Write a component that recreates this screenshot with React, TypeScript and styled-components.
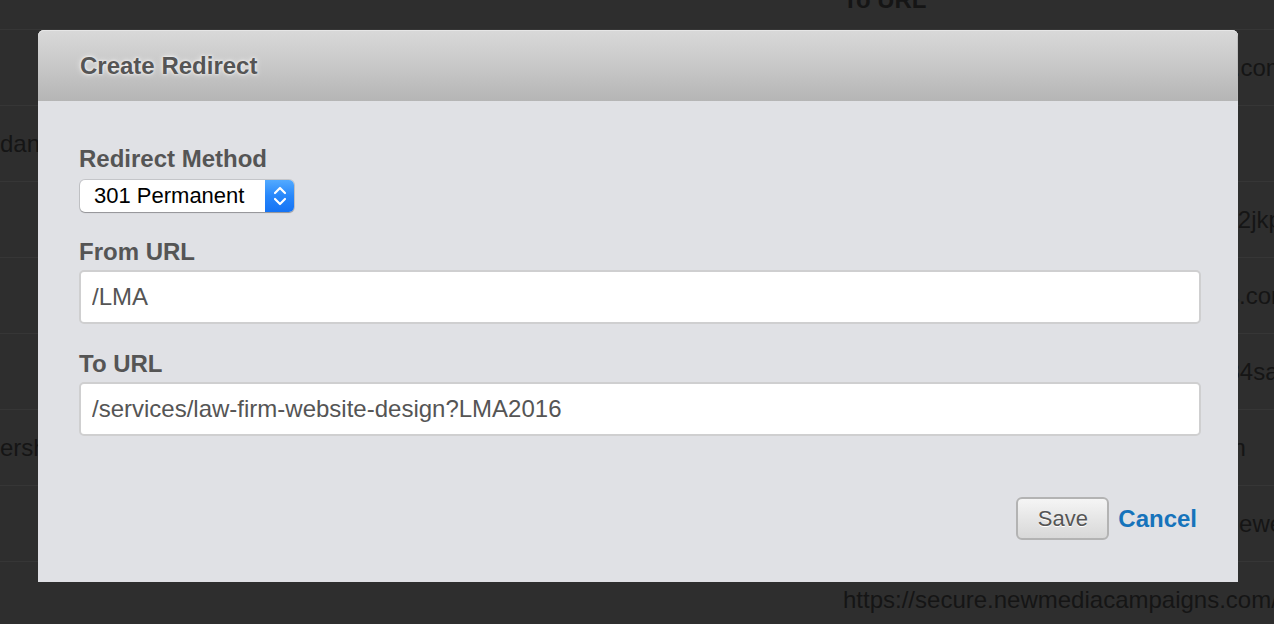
import React, { useEffect, useRef } from "react";
import styled, { createGlobalStyle } from "styled-components";

const GlobalStyle = createGlobalStyle`
  html, body {
    margin: 0;
    padding: 0;
    background: #2e2e2e;
    overflow: hidden;
  }
  body {
    font-family: "Liberation Sans", Arial, Helvetica, sans-serif;
  }
  * { box-sizing: border-box; }
`;

const Page = styled.div`
  width: 1274px;
  height: 624px;
  overflow: hidden;
  background: #2e2e2e;
  color: #151515;
  font-size: 24px;
  position: relative;
`;

const Table = styled.div`
  display: grid;
  grid-template-columns: 843px 1fr;
`;

const HeaderCell = styled.div`
  height: 30px;
  border-bottom: 1px solid #363636;
  font-weight: bold;
  white-space: nowrap;
  overflow: hidden;
  line-height: 24px;
  & > span {
    display: block;
    margin-top: -12px;
  }
`;

const Cell = styled.div`
  height: 76px;
  border-bottom: 1px solid #363636;
  display: flex;
  align-items: center;
  white-space: nowrap;
  overflow: hidden;
  line-height: 28px;
`;

const Modal = styled.div`
  position: absolute;
  left: 38px;
  top: 30px;
  width: 1200px;
  height: 552px;
  display: flex;
  flex-direction: column;
  background: #e0e1e5;
  border-radius: 6px 6px 0 0;
`;

const ModalHeader = styled.div`
  height: 71px;
  flex: none;
  display: flex;
  align-items: center;
  padding-left: 42px;
  border-radius: 6px 6px 0 0;
  background: linear-gradient(to bottom, #d9d9d9 0%, #c8c8c8 50%, #b5b5b5 100%);
  box-shadow: inset 0 1px 0 #e6e6e6, inset -1px 0 0 #bdbdbd;
`;

const Title = styled.h2`
  margin: 0;
  font-size: 24px;
  line-height: 28px;
  font-weight: bold;
  color: #555555;
  text-shadow: 0 0 3px rgba(255, 255, 255, 1), 0 0 6px rgba(255, 255, 255, 0.7);
`;

const ModalBody = styled.div`
  flex: 1;
  display: flex;
  flex-direction: column;
  padding: 44px 37px 0 41px;
`;

const Field = styled.div<{ $top?: number }>`
  display: flex;
  flex-direction: column;
  align-items: flex-start;
  margin-top: ${(p) => p.$top ?? 0}px;
`;

const Label = styled.label<{ $gap?: number }>`
  display: block;
  font-size: 24px;
  line-height: 28px;
  font-weight: bold;
  color: #555555;
  margin-bottom: ${(p) => p.$gap ?? 4}px;
`;

const SelectBox = styled.div`
  width: 214px;
  height: 32px;
  display: flex;
  align-items: stretch;
  margin-left: 1px;
  border-radius: 5px;
  background: #ffffff;
  box-shadow: 0 0 0 1px rgba(0, 0, 0, 0.12), 0 1px 1px rgba(0, 0, 0, 0.25);
  overflow: hidden;
`;

const SelectValue = styled.span`
  flex: 1;
  display: flex;
  align-items: center;
  padding-left: 14px;
  font-size: 22px;
  color: #000000;
`;

const Stepper = styled.span`
  width: 29px;
  flex: none;
  display: flex;
  align-items: center;
  justify-content: center;
  background: linear-gradient(to bottom, #52aaff 0%, #2787fb 50%, #1573f4 100%);
`;

const TextInput = styled.input`
  width: 100%;
  height: 54px;
  border: 2px solid #cfcfd0;
  border-radius: 5px;
  background: #ffffff;
  padding: 0 11px;
  font-family: "Liberation Sans", Arial, Helvetica, sans-serif;
  font-size: 24px;
  color: #555555;
  caret-color: #333333;
  outline: none;
`;

const Actions = styled.div`
  display: flex;
  justify-content: flex-end;
  align-items: center;
  gap: 9px;
  margin-top: 61px;
  padding-right: 4px;
`;

const SaveButton = styled.button`
  width: 93px;
  height: 43px;
  border: 2px solid #b3b3b3;
  border-radius: 6px;
  background: linear-gradient(to bottom, #f5f5f5 0%, #e6e6e6 50%, #d8d8d8 100%);
  font-family: "Liberation Sans", Arial, Helvetica, sans-serif;
  font-size: 22px;
  color: #555555;
  text-shadow: 0 1px 0 #ffffff;
  padding: 0;
  cursor: pointer;
`;

const CancelLink = styled.a`
  font-size: 24px;
  font-weight: bold;
  color: #1673bb;
  text-decoration: none;
  cursor: pointer;
`;

const rows: [string, string][] = [
  ["", "https://www.lawfirmwebsitedesigners.com/"],
  ["dance-studio-marketing", ""],
  ["", "https://www.dropbox.com/s/q7vw0h8i2jkpx3/"],
  ["", "https://ww2.lawfirmmarketingservices.com/"],
  ["", "https://www.youtube.com/watch?v=r84sa9LqW"],
  ["ershire-law-group", "https://www.lawfirmmarketingredesign"],
  ["", "https://www.lawfirmwebsites.com/reviewer"],
  ["", "https://secure.newmediacampaigns.com/"],
];

const Chevrons = () => (
  <svg width="16" height="24" viewBox="0 0 16 24" fill="none">
    <path d="M3 9 L8 4 L13 9" stroke="#fff" strokeWidth="2.2" strokeLinecap="round" strokeLinejoin="round" />
    <path d="M3 15 L8 20 L13 15" stroke="#fff" strokeWidth="2.2" strokeLinecap="round" strokeLinejoin="round" />
  </svg>
);

export default function App() {
  const toRef = useRef<HTMLInputElement>(null);
  useEffect(() => {
    const el = toRef.current;
    if (el) {
      el.focus();
      el.setSelectionRange(0, 0);
    }
  }, []);

  return (
    <>
      <GlobalStyle />
      <Page>
        <Table>
          <HeaderCell />
          <HeaderCell><span>To URL</span></HeaderCell>
          {rows.map(([a, b], i) => (
            <React.Fragment key={i}>
              <Cell>{a}</Cell>
              <Cell>{b}</Cell>
            </React.Fragment>
          ))}
        </Table>
        <Modal>
          <ModalHeader>
            <Title>Create Redirect</Title>
          </ModalHeader>
          <ModalBody>
            <Field>
              <Label $gap={7}>Redirect Method</Label>
              <SelectBox>
                <SelectValue>301 Permanent</SelectValue>
                <Stepper>
                  <Chevrons />
                </Stepper>
              </SelectBox>
            </Field>
            <Field $top={26}>
              <Label>From URL</Label>
              <TextInput defaultValue="/LMA" />
            </Field>
            <Field $top={26}>
              <Label>To URL</Label>
              <TextInput ref={toRef} defaultValue="/services/law-firm-website-design?LMA2016" />
            </Field>
            <Actions>
              <SaveButton>Save</SaveButton>
              <CancelLink>Cancel</CancelLink>
            </Actions>
          </ModalBody>
        </Modal>
      </Page>
    </>
  );
}
